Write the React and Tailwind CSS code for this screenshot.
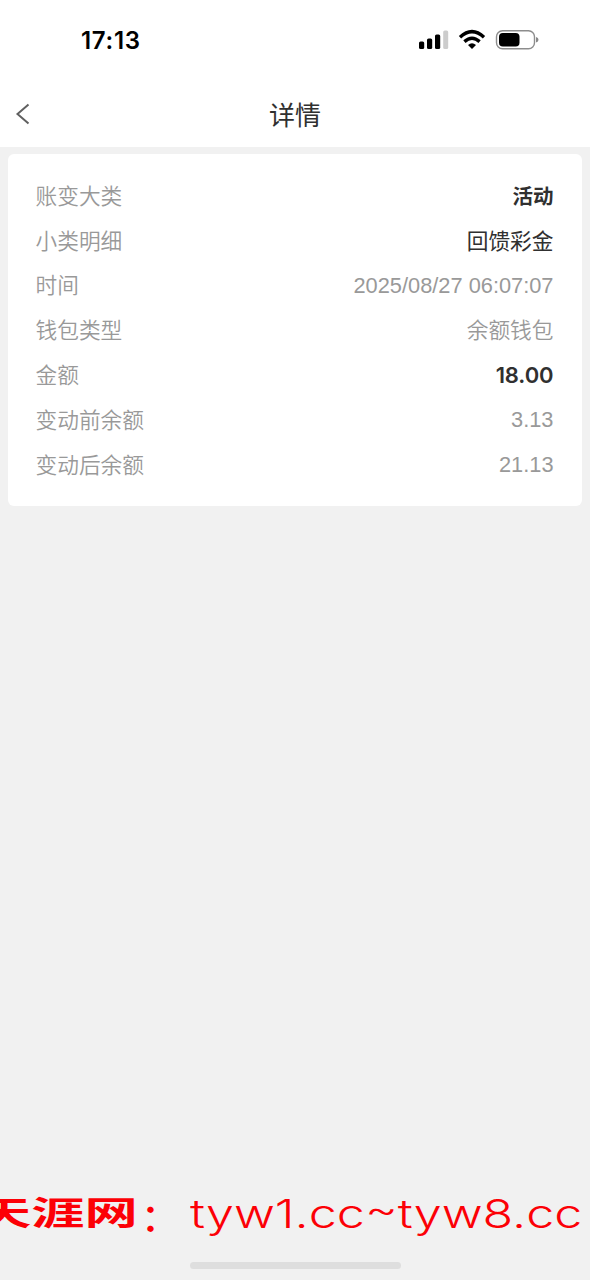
import React from 'react';

const rows = [
  { label: '账变大类', value: '活动', style: 'pt-[2px] text-[20.5px] font-bold text-[#303030]' },
  { label: '小类明细', value: '回馈彩金', style: 'pt-px text-[#303030]' },
  { label: '时间', value: '2025/08/27 06:07:07', style: 'text-[21.8px] text-[#999999]' },
  { label: '钱包类型', value: '余额钱包', style: 'pt-px font-[350] text-[#999999]' },
  { label: '金额', value: '18.00', style: "pb-[2px] font-['Inter',sans-serif] text-[22px] font-semibold tracking-[-0.1px] text-[#303030]" },
  { label: '变动前余额', value: '3.13', style: 'text-[21.8px] text-[#999999]' },
  { label: '变动后余额', value: '21.13', style: 'text-[21.8px] text-[#999999]' },
];

const StatusBar = () => (
  <div className="flex h-[82px] items-start justify-between pl-[81px] pr-[51px]">
    <span className="mt-[26px] font-['Inter',sans-serif] text-[24px] leading-[30px] font-semibold tracking-[0.7px] text-black">
      17:13
    </span>
    <svg className="mt-[29px]" width="121" height="22" viewBox="0 0 121 22">
      {/* Signal */}
      <rect x="1" y="12.5" width="5.2" height="7.5" rx="1.6" />
      <rect x="9" y="9.5" width="5.2" height="10.5" rx="1.6" />
      <rect x="17" y="5.5" width="5.2" height="14.5" rx="1.6" />
      <rect x="25.2" y="1.5" width="5" height="18.5" rx="1.6" fill="#cccccc" />
      {/* Wifi */}
      <g fill="none" stroke="#000" strokeWidth="3.4">
        <path d="M42 8.2 Q54 -3 66 8.2" />
        <path d="M46.4 12.6 Q54 6 61.6 12.6" />
      </g>
      <path d="M50 16 Q54 12.3 58 16 L54 20 Z" />
      {/* Battery */}
      <rect x="78.5" y="1.7" width="38" height="18" rx="6" fill="none" stroke="#8d8d8d" strokeWidth="1.4" />
      <rect x="81" y="4" width="20.5" height="13.5" rx="3.8" />
      <path d="M118 8 Q120.5 8.5 120.5 10.8 Q120.5 13 118 13.6 Z" fill="#888888" />
    </svg>
  </div>
);

const Header = () => (
  <header className="grid h-[65px] grid-cols-[1fr_auto_1fr] items-center">
    <button className="ml-[15px] w-[16px] pb-[2px]">
      <svg width="16" height="22" viewBox="0 0 16 22" fill="none" stroke="#606060" strokeWidth="2">
        <path d="M13.5 1.5 L2.5 11 L13.5 20.5" />
      </svg>
    </button>
    <h1 className="pt-[2px] text-[26px] leading-[36px] text-[#303030]">详情</h1>
  </header>
);

const App = () => {
  return (
    <div className="flex h-[1280px] w-[590px] flex-col overflow-hidden bg-[#f1f1f1] font-['Liberation_Sans','Noto_Sans_CJK_SC',sans-serif]">
      <div className="bg-white">
        <StatusBar />
        <Header />
      </div>

      <main className="mx-2 mt-[7px] h-[352px] rounded-[6px] bg-white pt-[20px] pr-[28.5px] pl-[27.5px]">
        {rows.map((row) => (
          <div key={row.label} className="flex h-[44.8px] items-center justify-between text-[21.7px] leading-[30px] whitespace-nowrap">
            <span className="pt-px font-[350] text-[#999999]">{row.label}</span>
            <span className={row.style}>{row.value}</span>
          </div>
        ))}
      </main>

      {/* Site banner and home indicator */}
      <footer className="mt-auto flex h-[94px] flex-col">
        <div className="flex h-[60px] items-start whitespace-nowrap text-[#fc0006]">
          <span className="-ml-[22px] w-[158px] shrink-0">
            <span className="inline-block origin-left scale-x-[1.5] scale-y-[0.93] font-['Noto_Sans_CJK_SC',sans-serif] text-[35.5px] leading-[50px] font-bold">
              天涯网
            </span>
          </span>
          <span className="mt-[4px] w-[54px] shrink-0 pl-[5px] font-['Noto_Sans_CJK_SC',sans-serif] text-[38px] leading-[50px] font-medium">：</span>
          <span className="mt-[3px] inline-block origin-left scale-x-[1.287] font-['Inter',sans-serif] text-[39px] leading-[50px] font-[350]">
            tyw1.cc<span className="inline-block -translate-y-[5px]">~</span>tyw8.cc
          </span>
        </div>
        <div className="mx-auto mt-[16px] h-[7px] w-[211px] rounded-full bg-[#dedede]" />
      </footer>
    </div>
  );
};

export default App;
